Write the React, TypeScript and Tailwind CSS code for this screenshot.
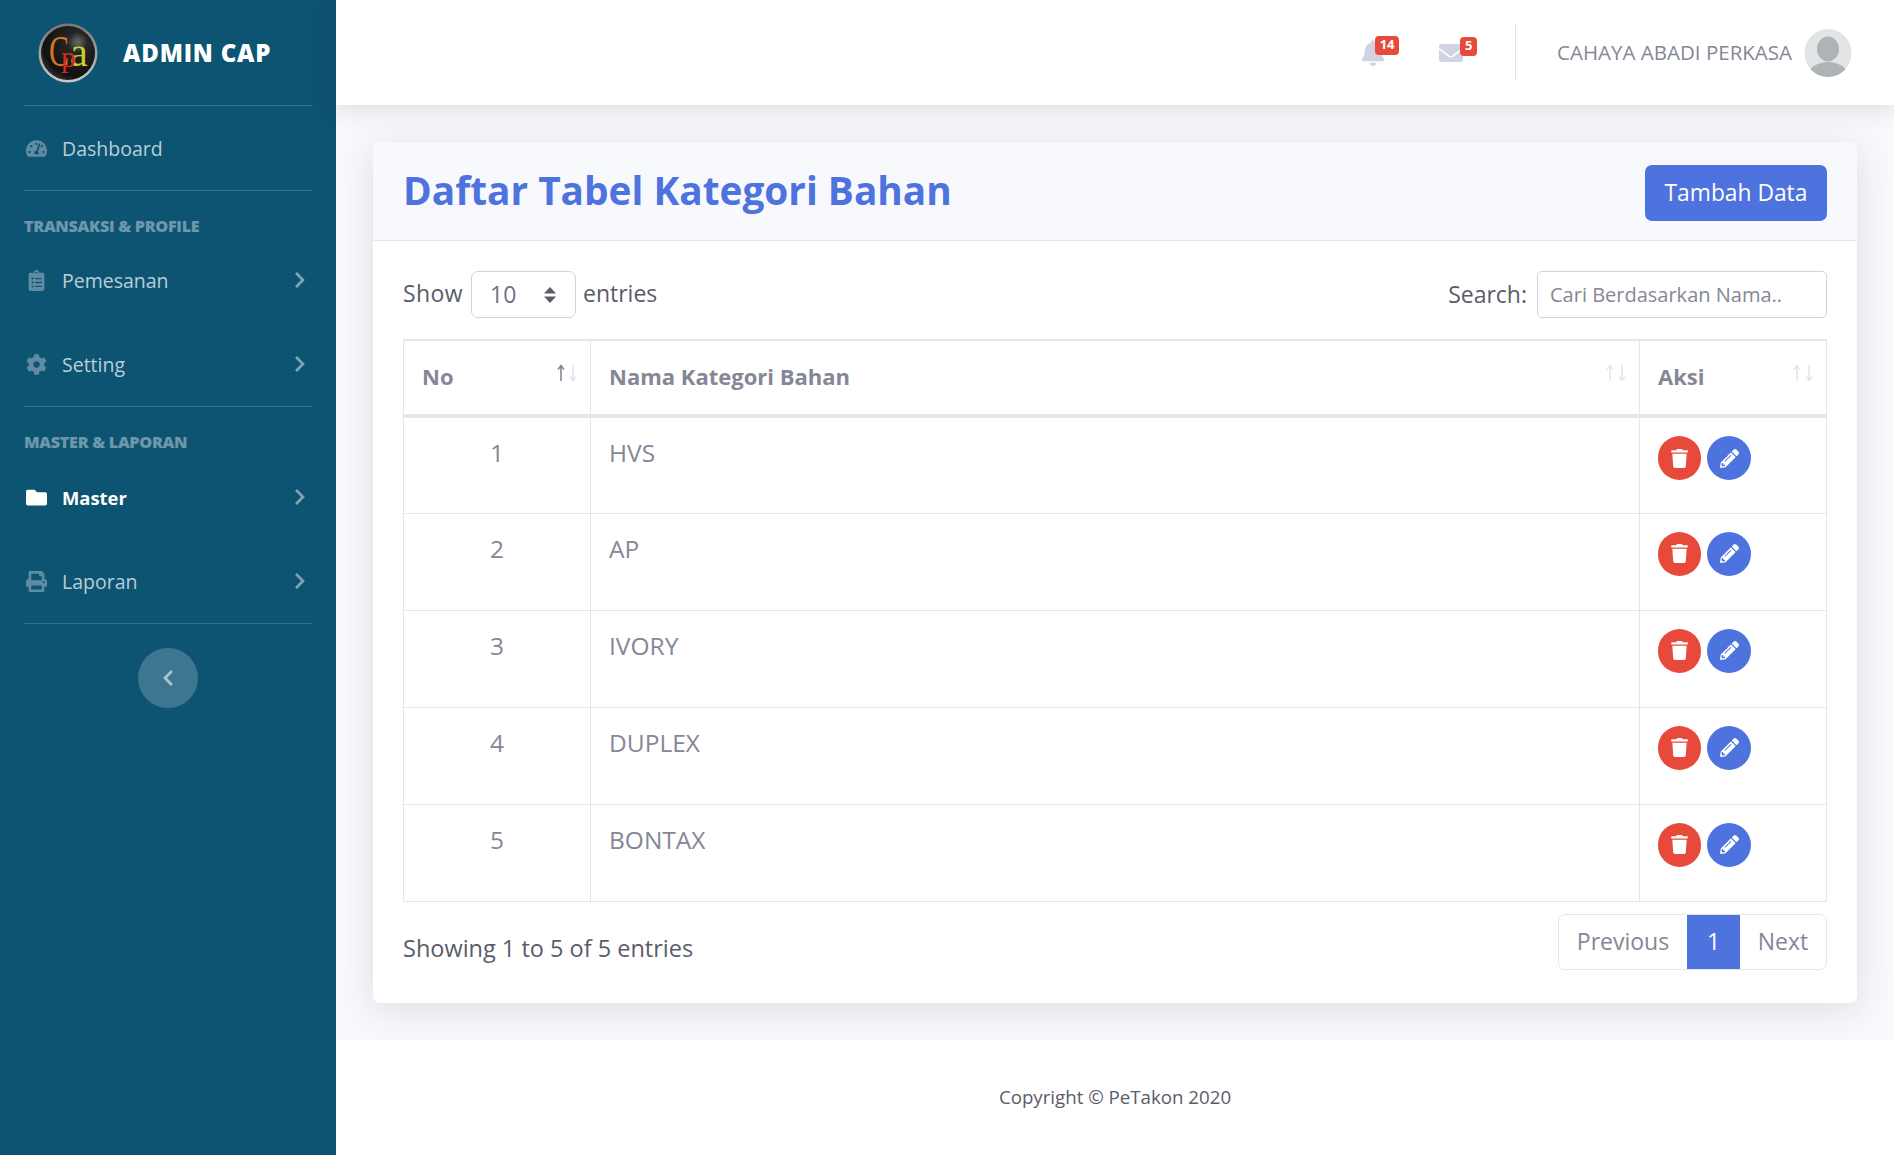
import { FaTachometerAlt, FaClipboardList, FaCog, FaFolder, FaPrint, FaChevronRight, FaChevronLeft, FaBell, FaEnvelope, FaTrash, FaPencilAlt } from "react-icons/fa";
import type { ReactNode } from "react";

function NavItem({ icon, label, active, chevron = true }: { icon: ReactNode; label: string; active?: boolean; chevron?: boolean }) {
  return (
    <div className={`flex h-[84px] items-center px-6 ${active ? "text-white font-bold" : "text-[#b9ced9]"}`}>
      <span className={`flex w-[24px] justify-center text-[21px] ${active ? "text-white" : "text-[#5f8ca2]"}`}>{icon}</span>
      <span className={`ml-[14px] mt-[2px] ${active ? "text-[18.4px]" : "text-[19.5px]"}`}>{label}</span>
      {chevron && <FaChevronRight className="ml-auto mr-[3px] text-[18px] text-[#7ea3b5]" />}
    </div>
  );
}

function Divider() {
  return <div className="mx-6 h-px bg-[#34708b]" />;
}

function Heading({ label, pb }: { label: string; pb: string }) {
  return <div className={`px-6 pt-[26px] ${pb} text-[16.2px] leading-[18px] font-extrabold tracking-[-0.3px] text-[#6d98ab] uppercase`}>{label}</div>;
}

function Logo() {
  return (
    <svg width="60" height="60" viewBox="0 0 60 60" className="shrink-0">
      <defs>
        <radialGradient id="ball" cx="0.68" cy="0.3" r="0.75">
          <stop offset="0" stopColor="#6a6a6a" />
          <stop offset="0.25" stopColor="#252525" />
          <stop offset="0.85" stopColor="#111" />
          <stop offset="1" stopColor="#2a2a2a" />
        </radialGradient>
        <linearGradient id="ring" x1="0" y1="0" x2="0" y2="1">
          <stop offset="0" stopColor="#777" />
          <stop offset="1" stopColor="#c9c9c9" />
        </linearGradient>
      </defs>
      <circle cx="30" cy="30" r="29.5" fill="url(#ring)" />
      <circle cx="30" cy="30" r="27" fill="url(#ball)" />
      <text transform="translate(11 43) scale(0.68 1)" fontFamily="'Liberation Serif', serif" fontSize="44" fill="#d9751f">C</text>
      <text x="32" y="43" fontFamily="'Liberation Serif', serif" fontSize="40" fill="#c9d12c">a</text>
      <text x="23" y="44" fontFamily="'Liberation Serif', serif" fontSize="30" fill="#d8261c">p</text>
    </svg>
  );
}

function Sort({ active }: { active?: boolean }) {
  return (
    <svg width="22" height="18" viewBox="0 0 22 18" className="absolute right-[12px] top-[23px]" fill="none" strokeWidth="1.6">
      <path d="M5 17V2M2 5.5L5 1.5L8 5.5" stroke={active ? "#858796" : "#e3e6f0"} />
      <path d="M17 1V16M14 12.5L17 16.5L20 12.5" stroke="#e3e6f0" />
    </svg>
  );
}

const rows = ["HVS", "AP", "IVORY", "DUPLEX", "BONTAX"];

export default function App() {
  return (
    <div className="flex min-h-[1155px] bg-[#f8f9fc] font-['Open_Sans',sans-serif] text-[#858796]">
      <aside className="w-[336px] shrink-0 bg-[#0d5472]">
        <div className="flex h-[105px] items-center pl-[38px]">
          <Logo />
          <span className="ml-[25px] text-[24px] font-extrabold tracking-[0.8px] text-white">ADMIN CAP</span>
        </div>
        <Divider />
        <NavItem icon={<FaTachometerAlt />} label="Dashboard" chevron={false} />
        <Divider />
        <Heading label="Transaksi & Profile" pb="pb-[3px]" />
        <NavItem icon={<FaClipboardList />} label="Pemesanan" />
        <NavItem icon={<FaCog />} label="Setting" />
        <Divider />
        <Heading label="Master & Laporan" pb="pb-[4px]" />
        <NavItem icon={<FaFolder />} label="Master" active />
        <NavItem icon={<FaPrint />} label="Laporan" />
        <Divider />
        <div className="mt-[24px] flex justify-center">
          <div className="flex h-[60px] w-[60px] items-center justify-center rounded-full bg-[#3d7690]">
            <FaChevronLeft className="text-[18px] text-[#a9c3cf]" />
          </div>
        </div>
      </aside>

      <div className="flex min-w-0 flex-1 flex-col">
        <header className="z-10 flex h-[105px] items-center justify-end bg-white pr-[42px] shadow-[0_3px_24px_rgba(58,59,69,0.16)]">
          <div className="relative mr-[53px] flex text-[26px] text-[#d1d3e2]">
            <FaBell />
            <span className="absolute -top-[4px] left-[15px] flex h-[19px] w-[24px] items-center justify-center rounded-[4px] bg-[#e74a3b] text-[13px] font-bold text-white">14</span>
          </div>
          <div className="relative mr-[52px] flex text-[24px] text-[#d1d3e2]">
            <FaEnvelope />
            <span className="absolute -top-[4px] left-[21px] flex h-[19px] w-[17px] items-center justify-center rounded-[4px] bg-[#e74a3b] text-[13px] font-bold text-white">5</span>
          </div>
          <div className="h-[57px] w-px bg-[#e3e6f0]" />
          <span className="ml-[41px] text-[20.5px] text-[#858796]">CAHAYA ABADI PERKASA</span>
          <svg width="48" height="48" viewBox="0 0 48 48" className="ml-[12px]">
            <defs><clipPath id="av"><ellipse cx="24" cy="24" rx="23.5" ry="24" /></clipPath></defs>
            <ellipse cx="24" cy="24" rx="23.5" ry="24" fill="#e2e4e5" />
            <g clipPath="url(#av)" fill="#aeb3b5">
              <ellipse cx="24" cy="20" rx="11" ry="12.5" />
              <ellipse cx="24" cy="48" rx="21" ry="15" />
            </g>
          </svg>
        </header>

        <main className="flex-1 p-[37px]">
          <section className="overflow-hidden rounded-[7px] bg-white shadow-[0_6px_36px_rgba(58,59,69,0.14)]">
            <div className="flex h-[99px] items-center justify-between border-b border-[#e3e6f0] bg-[#f8f9fc] pl-[30px] pr-[30px]">
              <h1 className="-mt-[2px] text-[38.8px] leading-none font-bold text-[#4e73df]">Daftar Tabel Kategori Bahan</h1>
              <button className="mt-[4px] h-[56px] w-[182px] rounded-[7px] bg-[#4e73df] pt-[1px] text-[22.8px] text-white">Tambah Data</button>
            </div>
            <div className="px-[30px] pt-[30px] pb-[33px]">
              <div className="flex h-[47px] items-center justify-between text-[23px] text-[#5a5c69]">
                <div className="flex items-center">
                  <span className="pb-[2px] tracking-[0.4px]">Show</span>
                  <div className="ml-[8px] mr-[7px] flex h-[47px] w-[105px] items-center justify-between rounded-[7px] border border-[#d1d3e2] px-[18px] text-[#6e707e]">
                    <span>10</span>
                    <svg width="14" height="16" viewBox="0 0 14 16" fill="#5a5c69"><path d="M7 0L13 6.5H1ZM7 16L1 9.5H13Z" /></svg>
                  </div>
                  <span className="pb-[2px]">entries</span>
                </div>
                <div className="flex items-center">
                  <span>Search:</span>
                  <input placeholder="Cari Berdasarkan Nama.." className="ml-[10px] h-[47px] w-[290px] rounded-[5px] border border-[#d1d3e2] px-[12px] text-[20px] placeholder:text-[#858796]" />
                </div>
              </div>
              <table className="mt-[21px] w-full table-fixed border-collapse border border-[#e3e6f0]">
                <colgroup>
                  <col className="w-[187px]" />
                  <col />
                  <col className="w-[187px]" />
                </colgroup>
                <thead>
                  <tr className="h-[76px] border-t-[2px] border-b-[4px] border-[#e3e6f0]">
                    <th className="relative border-x border-[#e3e6f0] pb-[2px] pl-[18px] text-left text-[22px] font-bold">No<Sort active /></th>
                    <th className="relative border-x border-[#e3e6f0] pb-[2px] pl-[18px] text-left text-[22px] font-bold">Nama Kategori Bahan<Sort /></th>
                    <th className="relative border-x border-[#e3e6f0] pb-[2px] pl-[18px] text-left text-[22px] font-bold">Aksi<Sort /></th>
                  </tr>
                </thead>
                <tbody>
                  {rows.map((r, i) => (
                    <tr key={r} className="h-[97px] border-b border-[#e3e6f0] text-[24.5px]">
                      <td className="border-x border-[#e3e6f0] pt-[17px] text-center align-top">{i + 1}</td>
                      <td className="border-x border-[#e3e6f0] pt-[17px] pl-[18px] align-top">{r}</td>
                      <td className="border-x border-[#e3e6f0] pt-[18px] pl-[18px] align-top">
                        <div className="flex gap-[6px]">
                          <span className="flex h-[44px] w-[43px] items-center justify-center rounded-full bg-[#e74a3b] text-[19px] text-white"><FaTrash /></span>
                          <span className="flex h-[44px] w-[44px] items-center justify-center rounded-full bg-[#4e73df] text-[19px] text-white"><FaPencilAlt /></span>
                        </div>
                      </td>
                    </tr>
                  ))}
                </tbody>
              </table>
              <div className="mt-[12px] flex items-start justify-between">
                <span className="mt-[17px] text-[23.5px] text-[#5a5c69]">Showing 1 to 5 of 5 entries</span>
                <div className="flex h-[56px] overflow-hidden rounded-[7px] border border-[#e3e6f0] text-[23px]">
                  <span className="flex w-[128px] items-center justify-center">Previous</span>
                  <span className="flex w-[53px] items-center justify-center bg-[#4e73df] text-white">1</span>
                  <span className="flex w-[86px] items-center justify-center">Next</span>
                </div>
              </div>
            </div>
          </section>
        </main>

        <footer className="flex h-[115px] items-center justify-center bg-white text-[18.7px] text-[#5a5c69]">
          Copyright © PeTakon 2020
        </footer>
      </div>
    </div>
  );
}
